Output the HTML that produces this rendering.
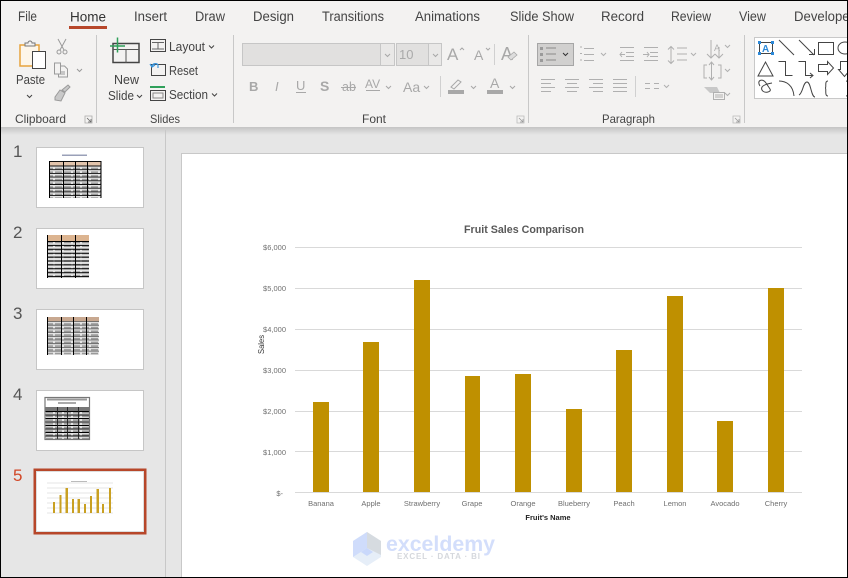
<!DOCTYPE html>
<html><head><meta charset="utf-8"><style>
html,body{margin:0;padding:0;background:#e6e6e6}
svg{display:block}
text{font-family:"Liberation Sans",sans-serif}
</style></head><body>
<svg xmlns="http://www.w3.org/2000/svg" width="848" height="578" viewBox="0 0 848 578">
<defs>
<linearGradient id="sh" x1="0" y1="0" x2="0" y2="1"><stop offset="0" stop-color="#c4c4c4"/><stop offset="1" stop-color="#e6e6e6"/></linearGradient>
<filter id="b" x="-5%" y="-5%" width="110%" height="110%"><feGaussianBlur stdDeviation="0.3"/></filter>
<pattern id="cell" width="9" height="3.7" patternUnits="userSpaceOnUse"><rect width="9" height="3.7" fill="#e4e4e4"/><rect x="1" y="1.2" width="7" height="1.6" fill="#9a9a9a"/></pattern>
</defs>
<rect width="848" height="578" fill="#e6e6e6"/>
<rect x="0" y="0" width="848" height="127" fill="#f3f2f1"/>
<rect x="0" y="127" width="848" height="8" fill="url(#sh)"/>
<rect x="165" y="130" width="1" height="448" fill="#c8c8c8"/>

<!-- Tabs -->
<g font-size="13.5" fill="#444">
<text x="18" y="21" textLength="19" lengthAdjust="spacingAndGlyphs">File</text>
<text x="70" y="21.5" textLength="36" lengthAdjust="spacingAndGlyphs" fill="#333">Home</text>
<text x="134" y="21" textLength="33" lengthAdjust="spacingAndGlyphs">Insert</text>
<text x="195" y="21" textLength="30" lengthAdjust="spacingAndGlyphs">Draw</text>
<text x="253" y="21" textLength="41" lengthAdjust="spacingAndGlyphs">Design</text>
<text x="322" y="21" textLength="62" lengthAdjust="spacingAndGlyphs">Transitions</text>
<text x="415" y="21" textLength="65" lengthAdjust="spacingAndGlyphs">Animations</text>
<text x="510" y="21" textLength="64" lengthAdjust="spacingAndGlyphs">Slide Show</text>
<text x="601" y="21" textLength="43" lengthAdjust="spacingAndGlyphs">Record</text>
<text x="671" y="21" textLength="40" lengthAdjust="spacingAndGlyphs">Review</text>
<text x="739" y="21" textLength="27" lengthAdjust="spacingAndGlyphs">View</text>
<text x="794" y="21" textLength="60" lengthAdjust="spacingAndGlyphs">Developer</text>
</g>
<rect x="69" y="26" width="38" height="3" fill="#b7472a"/>

<!-- Group separators -->
<g fill="#c8c8c8">
<rect x="96" y="35" width="1" height="88"/>
<rect x="233" y="35" width="1" height="88"/>
<rect x="528" y="35" width="1" height="88"/>
<rect x="744" y="35" width="1" height="88"/>
</g>

<!-- Clipboard -->
<path d="M20 45h19v21h-19z" fill="#fdf6ea" stroke="#e8a33d" stroke-width="1.500"/>
<path d="M25 45v-2h3a2 2 0 0 1 4 0h3v3h-10z" fill="#f3f2f1" stroke="#777" stroke-width="1"/>
<rect x="32.500" y="51.500" width="13" height="17" fill="#fff" stroke="#444"/>
<text x="16" y="84" font-size="13" fill="#444" textLength="29" lengthAdjust="spacingAndGlyphs">Paste</text>
<path d="M27 95l2.500 2.500 2.500-2.500" fill="none" stroke="#444"/>
<g fill="none" stroke="#9a9a9a" stroke-width="1">
<path d="M58 39l6 11M66 39l-6 11"/><circle cx="59" cy="52" r="2"/><circle cx="65" cy="52" r="2"/>
<path d="M54.500 74v-11h6v11zM60.500 66h4l3 3v8h-9v-3" fill="#f3f2f1"/><path d="M61 72h4M61 74h4"/>
<path d="M77 69l2.500 2.500 2.500-2.500"/>
</g>
<path d="M55 97l5-7 5 3-4 8-6-1zM62 90l6-5 2 2-5 5z" fill="#c9c9c9" stroke="#9a9a9a"/>
<text x="15" y="123" font-size="12" fill="#444" textLength="51" lengthAdjust="spacingAndGlyphs">Clipboard</text>
<path d="M85 116h7v7h-7z" fill="none" stroke="#aaa" stroke-width="0.800"/><path d="M87 118l4 4M91 119v3h-3" fill="none" stroke="#666" stroke-width="0.800"/>

<!-- Slides -->
<path d="M113 43.500h26v19h-26z" fill="#f3f2f1" stroke="#444" stroke-width="1.500"/>
<path d="M113 49.500h26M126 50v13" stroke="#555" fill="none"/>
<path d="M110 46h15M117.500 37.500v15" stroke="#2fa05a" stroke-width="1.500" fill="none"/>
<text x="114" y="84" font-size="13" fill="#444" textLength="25" lengthAdjust="spacingAndGlyphs">New</text>
<text x="108" y="100" font-size="13" fill="#444" textLength="26" lengthAdjust="spacingAndGlyphs">Slide</text>
<path d="M137 95l2.500 2.500 2.500-2.500" fill="none" stroke="#444"/>

<rect x="150.500" y="39.500" width="15" height="12" fill="#f3f2f1" stroke="#444"/><path d="M152 42.500h12M158 42.500v7M152 49h12" stroke="#666" fill="none"/>
<text x="169" y="51" font-size="13" fill="#444" textLength="36" lengthAdjust="spacingAndGlyphs">Layout</text>
<path d="M209 45.500l2.500 2.500 2.500-2.500" fill="none" stroke="#444"/>
<rect x="151.500" y="64.500" width="14" height="11" fill="#f3f2f1" stroke="#444"/>
<path d="M152 66c1-3 5-3 6-1v3M150 64l2 3 3-2" fill="none" stroke="#3a96dd" stroke-width="1.200"/>
<text x="169" y="75" font-size="13" fill="#444" textLength="29" lengthAdjust="spacingAndGlyphs">Reset</text>
<rect x="150" y="86" width="15" height="2" fill="#2fa05a"/>
<rect x="150.500" y="90.500" width="15" height="10" fill="#f3f2f1" stroke="#444"/><rect x="153" y="93" width="10" height="5" fill="none" stroke="#888"/>
<text x="169" y="99" font-size="13" fill="#444" textLength="39" lengthAdjust="spacingAndGlyphs">Section</text>
<path d="M212 93.500l2.500 2.500 2.500-2.500" fill="none" stroke="#444"/>
<text x="150" y="123" font-size="12" fill="#444" textLength="30" lengthAdjust="spacingAndGlyphs">Slides</text>

<!-- Font -->
<rect x="242.500" y="43.500" width="152" height="22" fill="#e1e0df" stroke="#c6c6c6"/>
<rect x="380.500" y="43.500" width="14" height="22" fill="#e9e8e7" stroke="#c6c6c6"/>
<rect x="396.500" y="43.500" width="45" height="22" fill="#e1e0df" stroke="#c6c6c6"/>
<rect x="428.500" y="43.500" width="13" height="22" fill="#e9e8e7" stroke="#c6c6c6"/>
<g fill="none" stroke="#a8a8a8">
<path d="M385 54l2.500 2.500 2.500-2.500M433 54l2.500 2.500 2.500-2.500"/>
<path d="M386 86l2.500 2.500 2.500-2.500M424 86l2.500 2.500 2.500-2.500M471 86l2.500 2.500 2.500-2.500M510 86l2.500 2.500 2.500-2.500"/>
<path d="M460 50l2-2 2 2M486 48l2 2 2-2"/>
</g>
<rect x="494" y="44" width="1" height="21" fill="#d0d0d0"/>
<rect x="440" y="76" width="1" height="21" fill="#d0d0d0"/>
<text x="399" y="59" font-size="13" fill="#aaa">10</text>
<g fill="#a8a8a8">
<text x="447" y="60" font-size="17">A</text>
<text x="474" y="60" font-size="14">A</text>
<text x="501" y="60" font-size="18">A</text>
<text x="249" y="91" font-size="13" font-weight="bold">B</text>
<text x="275" y="91" font-size="13" font-style="italic">I</text>
<text x="296" y="90" font-size="13">U</text>
<rect x="296" y="92" width="10" height="1"/>
<text x="320" y="91" font-size="14" font-weight="bold">S</text>
<text x="342" y="91" font-size="12.500">ab</text>
<rect x="341" y="87" width="15" height="1"/>
<text x="365" y="88" font-size="12">AV</text>
<path d="M366 90h14v1h-14z"/>
<text x="403" y="92" font-size="14">Aa</text>
<rect x="448" y="90" width="16" height="4"/>
<rect x="487" y="90" width="16" height="4"/>
<text x="490" y="88" font-size="14">A</text>
</g>
<path d="M451 87l7-7 3 2-7 7z" fill="none" stroke="#a8a8a8"/>
<path d="M508 57l6-5 3 3-6 5z" fill="#ddd" stroke="#a8a8a8" stroke-width="0.800"/>
<text x="362" y="123" font-size="12" fill="#444" textLength="24" lengthAdjust="spacingAndGlyphs">Font</text>
<path d="M517 116h7v7h-7z" fill="none" stroke="#bbb" stroke-width="0.800"/><path d="M519 118l4 4M523 119v3h-3" fill="none" stroke="#999" stroke-width="0.800"/>

<!-- Paragraph -->
<rect x="537.500" y="43.500" width="36" height="22" fill="#d1d0cf" stroke="#a6a6a6"/>
<path d="M546 48h10M546 54h10M546 60h10" fill="none" stroke="#8a8a8a"/>
<rect x="540" y="47" width="3" height="3" fill="#9a9a9a"/><rect x="540" y="53" width="3" height="3" fill="#9a9a9a"/><rect x="540" y="59" width="3" height="3" fill="#9a9a9a"/>
<path d="M563 53l2.500 2.500 2.500-2.500" fill="none" stroke="#333"/>
<g fill="none" stroke="#b0b0b0">
<path d="M584 48.500h10M584 54.500h10M584 60.500h10"/>
<path d="M580 47h2M580 53.500h2M580 60h2"/>
<path d="M601 53l2.500 2.500 2.500-2.500"/>
<path d="M620 47.500h14M626 52.500h8M626 56.500h8M620 60.500h14M625 54.500h-5M622 52l-2 2.500 2 2.500"/>
<path d="M644 47.500h14M650 52.500h8M650 56.500h8M644 60.500h14M643 54.500h6M647 52l2 2.500-2 2.500"/>
<path d="M671 47v16M668 49.500l3-3 3 3M668 60.500l3 3 3-3M677 48h10M677 54h10M677 60h10"/>
<path d="M691 53l2.500 2.500 2.500-2.500"/>
<path d="M541 79.500h14M541 83.500h10M541 87.500h14M541 91.500h10"/>
<path d="M565 79.500h14M567 83.500h10M565 87.500h14M567 91.500h10"/>
<path d="M589 79.500h14M593 83.500h10M589 87.500h14M593 91.500h10"/>
<path d="M613 79.500h14M613 83.500h14M613 87.500h14M613 91.500h14"/>
<path d="M645 83.500h5M645 88.500h5M654 83.500h5M654 88.500h5"/>
<path d="M664 85l2.500 2.500 2.500-2.500"/>
<path d="M711 40v18M707 54l4 4 4-4M719 47v11M715 54l4 4 4-4"/>
<path d="M725 45l2.500 2.500 2.500-2.500M725 69l2.500 2.500 2.500-2.500M725 93l2.500 2.500 2.500-2.500"/>
<path d="M707 65h-3v13h3M718 65h3v13h-3M711.500 62v18M709 65l2.500-3 2.500 3M709 77l2.500 3 2.500-3"/>
<path d="M704 87h13l3 6h-10z" fill="#c8c8c8" stroke="none"/>
<rect x="713.500" y="92.500" width="11" height="7" fill="#f3f2f1"/>
<path d="M715 95h8M715 97h8"/>
</g>
<rect x="635" y="76" width="1" height="21" fill="#d0d0d0"/>
<text x="714" y="51" font-size="9" fill="#b0b0b0">A</text>
<text x="602" y="123" font-size="12" fill="#444" textLength="53" lengthAdjust="spacingAndGlyphs">Paragraph</text>
<path d="M733 116h7v7h-7z" fill="none" stroke="#bbb" stroke-width="0.800"/><path d="M735 118l4 4M739 119v3h-3" fill="none" stroke="#999" stroke-width="0.800"/>

<!-- Shapes gallery -->
<rect x="754.500" y="37.500" width="94" height="61" fill="#fff" stroke="#c8c8c8"/>
<g fill="none" stroke="#444" stroke-width="1">
<rect x="759.500" y="42.500" width="13" height="11"/>
<path d="M779 40l15 15"/>
<path d="M799 40l15 15M809 54.500h5.500v-5.500"/>
<rect x="818.500" y="42.500" width="15" height="12"/>
<ellipse cx="845" cy="48" rx="7" ry="6"/>
<path d="M758 76l7.500-14 7.500 14z"/>
<path d="M778.500 61.500h7v14h7"/>
<path d="M798.500 61.500h7v14h7M810 73l3 2.500-3 2.500"/>
<path d="M818.500 64.500h9v-3l6 6.500-6 6.500v-3h-9z"/>
<path d="M840.500 61.500h7v8h3l-6 7-6-7h2z"/>
<path d="M760 86c-4-6 3-8 6-3l4 6c2 3-6 5-8 1s4-6 10-7"/>
<path d="M779 81c7 0 14 4 15 15"/>
<path d="M799 95c4-2 4-13 8-13s4 15 8 15"/>
<path d="M828 81c-4 0-1 7-3 7 2 0-1 8 3 8"/>
<path d="M846 81c4 0 1 7 3 7-2 0 1 8-3 8"/>
</g>
<g fill="#2b88d8"><rect x="758" y="41" width="3" height="3"/><rect x="771" y="41" width="3" height="3"/><rect x="758" y="52" width="3" height="3"/><rect x="771" y="52" width="3" height="3"/></g>
<text x="762" y="52" font-size="10" font-weight="bold" fill="#2b88d8">A</text>

<!-- Thumbnails -->
<g font-size="17" fill="#555">
<text x="13" y="157">1</text><text x="13" y="238">2</text><text x="13" y="319">3</text><text x="13" y="400">4</text>
<text x="13" y="481" fill="#d24726">5</text>
</g>
<g fill="#fff" stroke="#c6c6c6">
<rect x="36.500" y="147.500" width="107" height="60"/>
<rect x="36.500" y="228.500" width="107" height="60"/>
<rect x="36.500" y="309.500" width="107" height="60"/>
<rect x="36.500" y="390.500" width="107" height="60"/>
</g>
<rect x="35" y="470" width="110" height="63" fill="#fff" stroke="#b7472a" stroke-width="3"/>
<rect x="36.500" y="471.500" width="107" height="60" fill="none" stroke="#ddd" stroke-width="1"/>

<!-- thumb 1 -->
<g filter="url(#b)">
<rect x="62" y="154.500" width="25" height="1.500" fill="#9aa0b8"/>
<rect x="49" y="161" width="52" height="37" fill="url(#cell)"/>
<rect x="49" y="161" width="52" height="5" fill="#e2c4ac"/>
<path d="M49 161.500h52M49 166h52M49 169.700h52M49 173.400h52M49 177.100h52M49 180.800h52M49 184.500h52M49 188.200h52M49 191.900h52M49 195.600h52" stroke="#111" stroke-width="0.900"/>
<path d="M49.500 161v37M63.500 161v37M75.500 161v37M87.500 161v37M101 161v37" stroke="#000" stroke-width="1"/>
</g>
<!-- thumb 2 -->
<g filter="url(#b)">
<rect x="47" y="235" width="42" height="43" fill="url(#cell)"/>
<rect x="47" y="235" width="42" height="6" fill="#dcb490"/>
<path d="M47 241.500h42M47 245.400h42M47 249.300h42M47 253.200h42M47 257.100h42M47 261h42M47 264.900h42M47 268.800h42M47 272.700h42M47 276.600h42" stroke="#000" stroke-width="1"/>
<path d="M47.500 235v43M61.500 235v43M75.500 235v43" stroke="#000" stroke-width="1"/>
</g>
<!-- thumb 3 -->
<g filter="url(#b)">
<rect x="47" y="317" width="52" height="38" fill="url(#cell)"/>
<rect x="47" y="317" width="52" height="4.500" fill="#c8a890"/>
<path d="M47 321.500h52M47 325.200h52M47 328.900h52M47 332.600h52M47 336.300h52M47 340h52M47 343.700h52M47 347.400h52M47 351.100h52" stroke="#555" stroke-width="0.800"/>
<path d="M47.500 317v38M61.500 317v38M73.500 317v38M86.500 317v38" stroke="#000" stroke-width="1"/>
</g>
<!-- thumb 4 -->
<g filter="url(#b)">
<rect x="45" y="397.500" width="44.500" height="42" fill="#fff"/>
<rect x="47" y="398.500" width="40" height="2" fill="#999"/><rect x="58" y="402" width="18" height="2" fill="#aaa"/>
<rect x="45" y="407" width="44.500" height="32" fill="url(#cell)"/>
<rect x="45" y="407" width="44.500" height="4" fill="#777"/>
<path d="M45 411.500h44M45 415h44M45 418.500h44M45 422h44M45 425.500h44M45 429h44M45 432.500h44M45 436h44" stroke="#000" stroke-width="0.900"/>
<path d="M57.500 407v32M67.500 407v32M78.500 407v32" stroke="#222" stroke-width="0.900"/>
<rect x="45" y="397.500" width="44.500" height="42" fill="none" stroke="#777" stroke-width="1.200"/>
</g>
<!-- thumb 5 -->
<g filter="url(#b)">
<rect x="71" y="481" width="16" height="1" fill="#bbb"/>
<path d="M47 483h66M47 488h66M47 493h66M47 498h66M47 503h66M47 508h66M47 513h66" stroke="#e4e4e4" stroke-width="1"/>
</g>
<g fill="#c9a020" filter="url(#b)">
<rect x="53" y="502" width="2" height="11"/><rect x="59.500" y="495" width="2" height="18"/><rect x="65.500" y="488" width="2.500" height="25"/>
<rect x="72" y="499" width="2" height="14"/><rect x="77.500" y="499" width="2.500" height="14"/><rect x="84" y="504" width="2" height="9"/>
<rect x="90" y="496" width="2" height="17"/><rect x="96.500" y="489" width="2.500" height="24"/><rect x="102" y="504" width="2" height="9"/>
<rect x="109" y="488" width="2" height="25"/>
</g>

<!-- Slide -->
<rect x="181.500" y="153.500" width="680" height="430" fill="#fff" stroke="#c8c8c8"/>
<text x="464" y="233" font-size="11" font-weight="bold" fill="#595959" textLength="120" lengthAdjust="spacingAndGlyphs">Fruit Sales Comparison</text>
<g fill="#d9d9d9">
<rect x="295" y="247" width="507" height="1"/><rect x="295" y="288" width="507" height="1"/><rect x="295" y="329" width="507" height="1"/><rect x="295" y="370" width="507" height="1"/><rect x="295" y="411" width="507" height="1"/><rect x="295" y="451" width="507" height="1"/><rect x="295" y="492" width="507" height="1"/>
</g>
<g fill="#bf9000">
<rect x="313" y="402" width="16" height="90"/><rect x="363" y="342" width="16" height="150"/><rect x="414" y="280" width="16" height="212"/><rect x="465" y="376" width="15" height="116"/><rect x="515" y="374" width="16" height="118"/><rect x="566" y="409" width="16" height="83"/><rect x="616" y="350" width="16" height="142"/><rect x="667" y="296" width="16" height="196"/><rect x="717" y="421" width="16" height="71"/><rect x="768" y="288" width="16" height="204"/>
</g>
<g font-size="7.500" fill="#6f6f6f" text-anchor="end">
<text x="286" y="250">$6,000</text><text x="286" y="291">$5,000</text><text x="286" y="332">$4,000</text><text x="286" y="373">$3,000</text><text x="286" y="414">$2,000</text><text x="286" y="455">$1,000</text><text x="283" y="496">$-</text>
</g>
<g font-size="7.500" fill="#6f6f6f" text-anchor="middle">
<text x="321" y="506">Banana</text><text x="371" y="506">Apple</text><text x="422" y="506">Strawberry</text><text x="472" y="506">Grape</text><text x="523" y="506">Orange</text><text x="574" y="506">Blueberry</text><text x="624" y="506">Peach</text><text x="675" y="506">Lemon</text><text x="725" y="506">Avocado</text><text x="776" y="506">Cherry</text>
</g>
<text x="548" y="520" font-size="7.500" font-weight="bold" fill="#222" text-anchor="middle">Fruit's Name</text>
<text transform="translate(264,354) rotate(-90)" font-size="8" fill="#333" textLength="19" lengthAdjust="spacingAndGlyphs">Sales</text>

<!-- Watermark -->
<path d="M353 541l14-9 14 9v16l-14 9-14-9z" fill="#e6eef8"/>
<path d="M353 541l14-9v16l-14 9z" fill="#cfdcfb"/>
<path d="M367 532l14 9v14l-14-7z" fill="#d6dbe0"/>
<path d="M361 552l6-4 6 4-6 4z" fill="#c9d8fb"/>
<text x="386" y="551" font-size="21" font-weight="bold" fill="#d3defb" textLength="109" lengthAdjust="spacingAndGlyphs">exceldemy</text>
<text x="397" y="559" font-size="8" font-weight="bold" fill="#d5d8dd" textLength="83">EXCEL · DATA · BI</text>

<!-- Window border -->
<rect x="0" y="0" width="848" height="1" fill="#000"/>
<rect x="0" y="577" width="848" height="1" fill="#000"/>
<rect x="0" y="0" width="1" height="578" fill="#000"/>
<rect x="847" y="0" width="1" height="578" fill="#000"/>
</svg>
</body></html>
